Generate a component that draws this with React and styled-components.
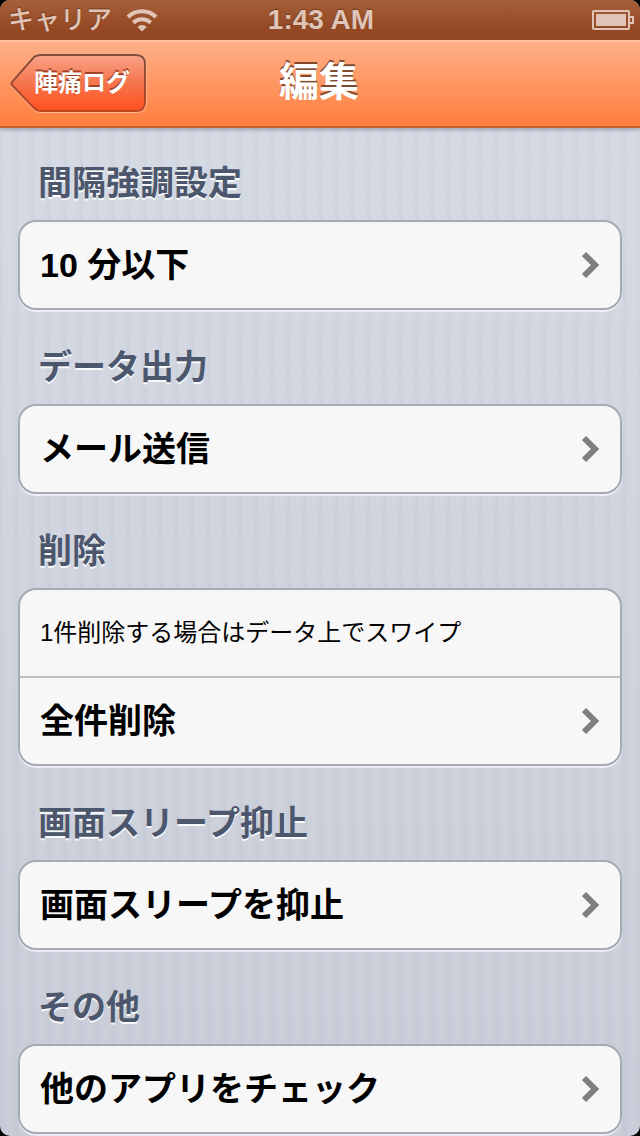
import styled, { createGlobalStyle } from "styled-components";

const SECTIONS = [
  { title: "間隔強調設定", rows: [{ label: "10 分以下" }] },
  { title: "データ出力", rows: [{ label: "メール送信" }] },
  {
    title: "削除",
    rows: [{ note: "1件削除する場合はデータ上でスワイプ" }, { label: "全件削除" }],
  },
  { title: "画面スリープ抑止", rows: [{ label: "画面スリープを抑止" }] },
  { title: "その他", rows: [{ label: "他のアプリをチェック" }] },
];

function StatusBar() {
  return (
    <Status>
      <Carrier>
        キャリア
        <svg width="32" height="24" viewBox="0 0 32 24" fill="none" stroke="#dfc4b7" strokeWidth="4" aria-hidden="true">
          <path d="M2 9a20 20 0 0 1 28 0" />
          <path d="M7.3 14.8a12.4 12.4 0 0 1 17.4 0" />
          <path d="M16 23.5l-4.6-4.6a6.6 6.6 0 0 1 9.2 0z" fill="#dfc4b7" stroke="none" />
        </svg>
      </Carrier>
      <Clock>1:43 AM</Clock>
      <Battery>
        <svg width="42" height="20" viewBox="0 0 42 20" fill="none" stroke="#dfc4b7" strokeWidth="2" aria-hidden="true">
          <rect x="1" y="1" width="36" height="18" rx="1" />
          <rect x="4" y="4" width="30" height="12" fill="#dfc4b7" stroke="none" />
          <path d="M38 7h3v6h-3" />
        </svg>
      </Battery>
    </Status>
  );
}

function BackButton({ children }) {
  return (
    <BackLink type="button">
      <svg viewBox="0 0 138 60" aria-hidden="true">
        <defs>
          <linearGradient id="backFill" x1="0" y1="0" x2="0" y2="1">
            <stop offset="0" stopColor="#f8a388" />
            <stop offset="0.5" stopColor="#f6754c" />
            <stop offset="1" stopColor="#ff5020" />
          </linearGradient>
          <linearGradient id="backEdge" x1="0" y1="0" x2="0" y2="1">
            <stop offset="0" stopColor="#80503d" />
            <stop offset="1" stopColor="#c0451f" />
          </linearGradient>
        </defs>
        <path
          d="M24 3Q27 1 31 1H126Q136 1 136 11V48Q136 58 126 58H31Q27 58 24 55L3 33Q0 30 3 27Z"
          fill="none"
          stroke="#ffb591"
          strokeWidth="2"
        />
        <path
          d="M24 3Q27 1 31 1H126Q135 1 135 10V48Q135 57 126 57H31Q27 57 24 54L2 31Q1 30 2 28Z"
          fill="url(#backFill)"
          stroke="url(#backEdge)"
          strokeWidth="2"
        />
      </svg>
      <span>{children}</span>
    </BackLink>
  );
}

function Chevron() {
  return (
    <svg width="18" height="28" viewBox="0 0 18 28" fill="none" stroke="#7f7f7f" strokeWidth="6" aria-hidden="true">
      <path d="M2 3l11 11L2 25" />
    </svg>
  );
}

export default function App() {
  return (
    <>
      <GlobalStyle />
      <Screen>
        <StatusBar />
        <NavBar>
          <BackButton>陣痛ログ</BackButton>
          <Title>編集</Title>
        </NavBar>
        <Content>
          {SECTIONS.map((section) => (
            <section key={section.title}>
              <SectionTitle>{section.title}</SectionTitle>
              <Group>
                {section.rows.map((row) => (
                  <Row key={row.note || row.label}>
                    {row.note ? (
                      <Note>{row.note}</Note>
                    ) : (
                      <RowButton type="button">
                        {row.label}
                        <Chevron />
                      </RowButton>
                    )}
                  </Row>
                ))}
              </Group>
            </section>
          ))}
        </Content>
      </Screen>
    </>
  );
}

const GlobalStyle = createGlobalStyle`
  * {
    box-sizing: border-box;
  }
  body {
    margin: 0;
    background: #000;
    font-family: "Liberation Sans", "Noto Sans CJK JP", sans-serif;
  }
  button {
    font-family: inherit;
    cursor: pointer;
  }
  svg {
    display: block;
    flex: none;
  }
`;

const Screen = styled.div`
  min-height: 100vh;
  border-radius: 10px;
  overflow: hidden;
  background:
    repeating-linear-gradient(90deg, rgba(120, 135, 160, 0.06) 0 2px, transparent 4px 12px, rgba(120, 135, 160, 0.06) 16px),
    linear-gradient(#d7dce5, #c9cdd8);
`;

const Status = styled.header`
  display: grid;
  grid-template-columns: 1fr auto 1fr;
  align-items: center;
  height: 40px;
  padding: 0 6px 0 8px;
  background: linear-gradient(#a66039, #944924 70%);
  color: #dfc4b7;
  font-size: 26px;
  line-height: 38px;
  text-shadow: 0 -1px 1px rgba(70, 30, 10, 0.5);
`;

const Carrier = styled.div`
  display: flex;
  align-items: center;
  gap: 14px;
  font-weight: 500;
`;

const Clock = styled.div`
  font-size: 28px;
  font-weight: bold;
`;

const Battery = styled.div`
  justify-self: end;
`;

const NavBar = styled.nav`
  display: grid;
  grid-template-columns: 1fr auto 1fr;
  align-items: center;
  height: 88px;
  padding: 0 12px 0 10px;
  border-top: 2px solid #ffbf9d;
  border-bottom: 2px solid #c65f30;
  background: linear-gradient(#ffaf88, #ff7e3c);
  box-shadow: 0 2px 4px rgba(60, 70, 90, 0.35);
`;

const Title = styled.h1`
  margin: 0;
  padding-bottom: 4px;
  color: #fff;
  font-size: 40px;
  font-weight: bold;
  line-height: 80px;
  text-shadow: 0 -2px 0 #80492e;
`;

const BackLink = styled.button`
  display: grid;
  justify-self: start;
  align-items: center;
  padding: 0;
  border: 0;
  background: none;
  color: #fff;
  font-size: 24px;
  font-weight: bold;
  line-height: 56px;
  text-shadow: 0 -2px 0 #a44326;

  svg,
  span {
    grid-area: 1 / 1;
  }
  svg {
    width: 138px;
    height: 60px;
  }
  span {
    padding: 0 18px 2px 24px;
  }
`;

const Content = styled.main`
  padding: 0 18px 2px;
`;

const SectionTitle = styled.h2`
  margin: 0;
  padding: 32px 20px 12px;
  color: #4c566c;
  font-size: 34px;
  font-weight: bold;
  line-height: 50px;
  text-shadow: 0 2px 0 rgba(255, 255, 255, 0.9);

  section:first-child > & {
    padding-top: 30px;
  }
`;

const Group = styled.ul`
  margin: 0;
  padding: 0;
  overflow: hidden;
  list-style: none;
  border: 2px solid #a5aab4;
  border-radius: 18px;
  background: #f7f7f7;
  box-shadow: 0 2px 0 rgba(255, 255, 255, 0.6);
`;

const Row = styled.li`
  & + & {
    border-top: 2px solid #c0c0c0;
  }
`;

const Note = styled.p`
  margin: 0;
  padding: 0 20px;
  color: #000;
  font-size: 24px;
  line-height: 86px;
`;

const RowButton = styled.button`
  display: flex;
  align-items: center;
  justify-content: space-between;
  width: 100%;
  padding: 0 20px;
  border: 0;
  background: none;
  color: #000;
  font-size: 34px;
  font-weight: bold;
  line-height: 86px;
  text-align: left;
`;
